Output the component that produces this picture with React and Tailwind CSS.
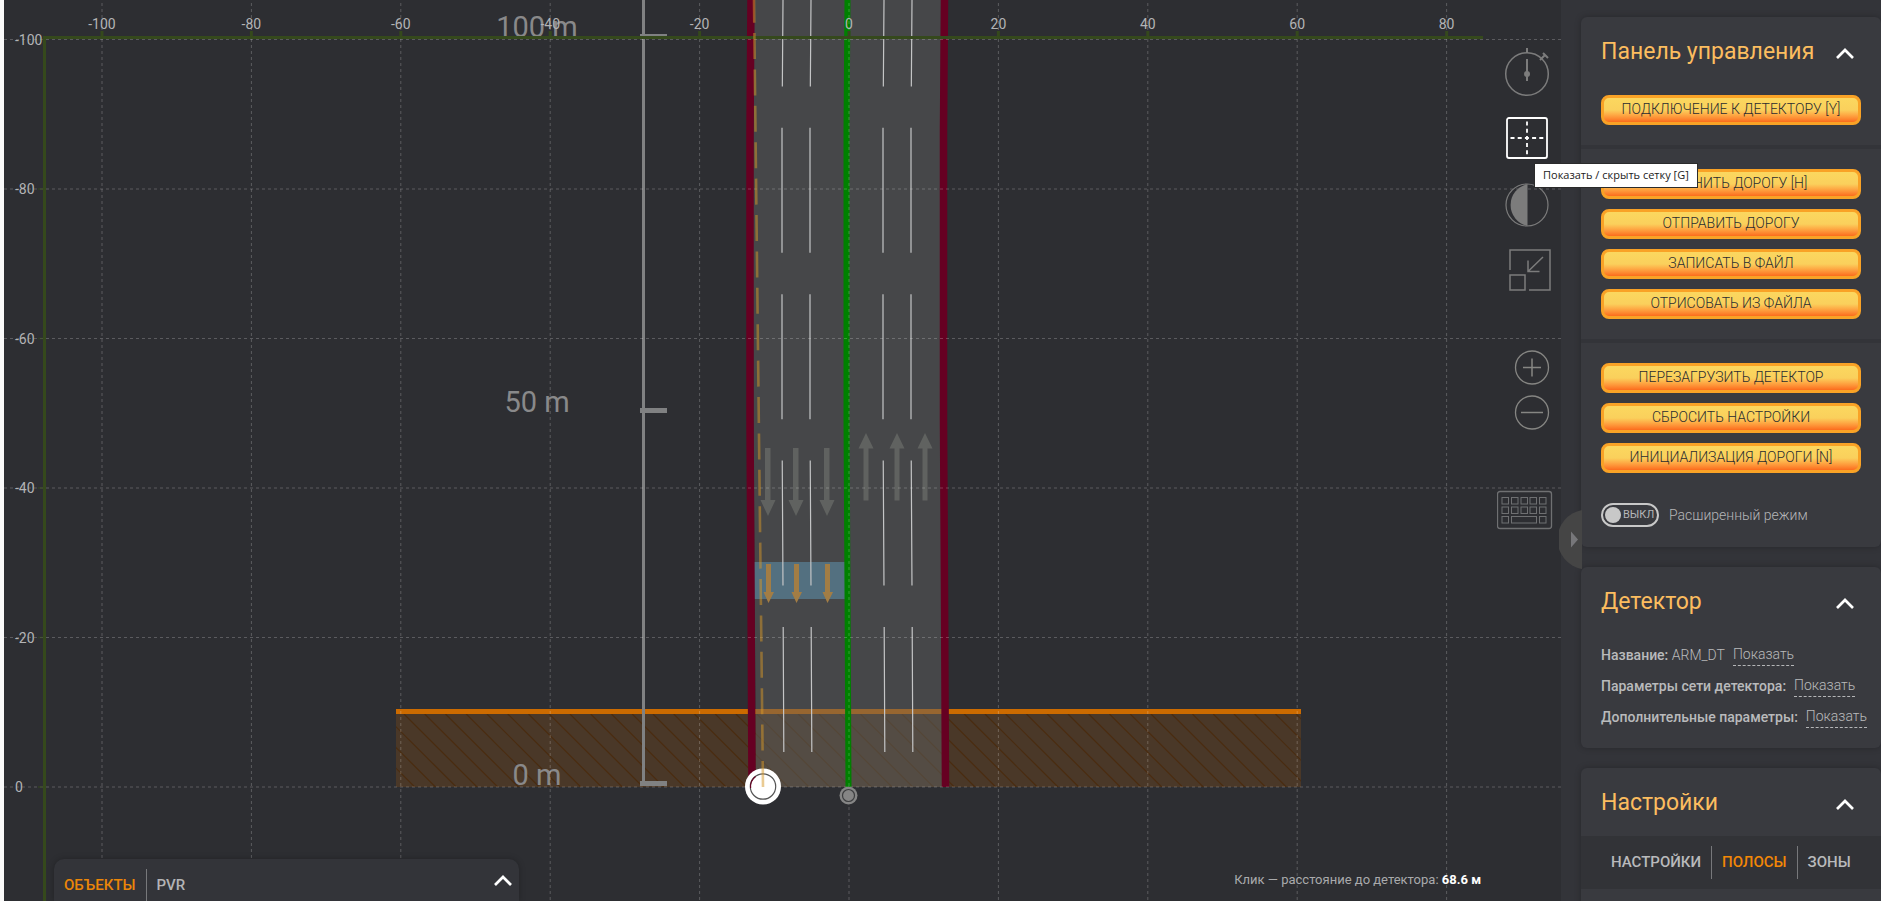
import { ChevronUp } from "lucide-react";

// Vertical drift of the road, [y, dx]
const BEND = [
  [0, 1],
  [130, 0],
  [420, 0],
  [590, 1],
  [787, 2],
];

const X_MARKS = [-100, -80, -60, -40, -20, 0, 20, 40, 60, 80];
const Y_MARKS = [-100, -80, -60, -40, -20, 0];
const LANES = [782, 810, 883, 911];
const DOWN_ARROWS = [768, 796, 827];
const UP_ARROWS = [866, 897, 925];
const HATCHES = Array.from({ length: 48 }, (_, i) => 321 + i * 20.75);

const toX = (m) => 849 + m * 7.47;
const toY = (m) => 787 + m * 7.475;
const roadLine = (x) => BEND.map(([y, dx]) => `${x + dx},${y}`).join(" ");

function RoadMap() {
  return (
    <svg
      viewBox="4 0 1557 901"
      preserveAspectRatio="xMinYMin slice"
      className="absolute inset-0 h-full w-full font-['Roboto',sans-serif]"
    >
      <defs>
        <clipPath id="ground">
          <rect x="396" y="714" width="905" height="73" />
        </clipPath>
      </defs>

      {/* Ground */}
      <rect x="396" y="712" width="905" height="75" fill="#4a3828" />
      <g clipPath="url(#ground)" stroke="#4a2c10" strokeWidth="1.2">
        {HATCHES.map((x) => (
          <line key={x} x1={x} y1="714" x2={x + 73} y2="787" />
        ))}
      </g>
      <rect x="396" y="709" width="905" height="5" fill="#cc6b00" />

      {/* Distance ruler */}
      <g fill="#808182">
        <rect x="642" y="0" width="3" height="786" />
        <rect x="640" y="34" width="27" height="5" />
        <rect x="640" y="408" width="27" height="5" />
        <rect x="640" y="781" width="27" height="5" />
      </g>
      <g fill="#89898a" fontSize="29" textAnchor="middle">
        <text x="537" y="37">100 m</text>
        <text x="537" y="412">50 m</text>
        <text x="537" y="785">0 m</text>
      </g>

      {/* Road */}
      <polygon
        points="754,0 753,250 754,500 756,787 943,787 941,500 940,250 941,0"
        fill="#606161"
        fillOpacity="0.49"
      />
      <rect x="754" y="562" width="91" height="37" fill="#629cbd" fillOpacity="0.48" />
      <g fill="none" stroke="#c4c5c6" strokeWidth="1.2" strokeDasharray="125 41.4" strokeDashoffset="38.6">
        {LANES.map((x) => (
          <polyline key={x} points={roadLine(x)} />
        ))}
      </g>
      <g fill="none" strokeWidth="7.5">
        <polyline points={roadLine(750)} stroke="#660022" />
        <polyline points={roadLine(943.5)} stroke="#660022" />
        <polyline points={roadLine(846.5)} stroke="#008000" strokeWidth="6" />
      </g>

      {/* Traffic directions */}
      <g fill="#606260">
        {DOWN_ARROWS.map((x) => (
          <path key={x} d={`M${x - 3} 448h5.5v52h5l-7.5 16-7.5-16h4.5z`} />
        ))}
        {UP_ARROWS.map((x) => (
          <path key={x} d={`M${x} 433l7.5 15.5h-5v52h-5v-52h-5z`} />
        ))}
      </g>
      <g fill="#a27d45">
        {DOWN_ARROWS.map((x) => (
          <path key={x} d={`M${x - 2} 564h5v28h3l-5.5 11-5-11h2.5z`} />
        ))}
      </g>

      {/* Grid */}
      <g stroke="#fff" strokeOpacity="0.22" strokeDasharray="3 3">
        {X_MARKS.map((m) => (
          <line key={m} x1={toX(m)} y1="3" x2={toX(m)} y2="901" />
        ))}
        {Y_MARKS.map((m) => (
          <line key={m} x1="4" y1={toY(m)} x2="1561" y2={toY(m)} />
        ))}
      </g>

      {/* Axes */}
      <g fill="#35491c">
        <rect x="43" y="36" width="1440" height="3" />
        <rect x="43" y="36" width="3" height="865" />
        {X_MARKS.map((m) => (
          <rect key={m} x={toX(m) - 1.5} y="31" width="3" height="6" />
        ))}
        {Y_MARKS.map((m) => (
          <rect key={m} x="38" y={toY(m) - 1} width="6" height="2" opacity="0.5" />
        ))}
      </g>
      <g fill="#b3b4b6" fontSize="14">
        {X_MARKS.map((m) => (
          <text key={m} x={toX(m)} y="29" textAnchor="middle">{m}</text>
        ))}
        {Y_MARKS.map((m) => (
          <text key={m} x="15" y={toY(m) + 5}>{m}</text>
        ))}
      </g>

      {/* Detector and origin handles */}
      <circle cx="763" cy="786.5" r="18" fill="#fff" />
      <circle cx="763" cy="786.5" r="12.7" fill="#fff" stroke="#555" strokeWidth="1.2" />
      <path d="M750.6 788a12.7 12.7 0 0 1 5-11.5" fill="none" stroke="#660022" strokeWidth="1.2" />
      <line
        x1="763"
        y1="787"
        x2="754"
        y2="0"
        stroke="#d69828"
        strokeOpacity="0.5"
        strokeWidth="2.6"
        strokeDasharray="26 10.4"
      />
      <circle cx="848.5" cy="795.5" r="9" fill="#858585" />
      <circle cx="848.5" cy="795.5" r="6" fill="#858585" stroke="#3c3d3f" strokeWidth="1.2" />
    </svg>
  );
}

function ToolButton({ label, className = "", children }) {
  return (
    <button type="button" aria-label={label} className={`w-14 ${className}`}>
      <svg viewBox="0 0 56 44" className="h-11 w-14 overflow-visible" fill="none" stroke="#7c7c7c" strokeWidth="1.5">
        {children}
      </svg>
    </button>
  );
}

function Toolbar() {
  return (
    <div className="absolute right-2 top-[51px] flex flex-col">
      <div className="flex flex-col gap-[22px]">
        <ToolButton label="Секундомер" className="h-11">
          <circle cx="30" cy="23" r="21.3" />
          <path d="M30 2v-5M30 8v22" strokeWidth="2" />
          <circle cx="30" cy="23" r="3" fill="#7c7c7c" stroke="none" />
          <path d="M43 9l5-5M46 2l5 5" strokeWidth="2" />
        </ToolButton>
        <div className="relative h-11">
          <ToolButton label="Сетка" className="h-11">
            <g stroke="#fff" strokeWidth="1.8">
              <rect x="10" y="1" width="40" height="40" rx="2" />
              <path d="M13.5 21h33" strokeDasharray="4 3.2" />
              <path d="M30 4.5v33" strokeDasharray="4 3.2" />
            </g>
          </ToolButton>
          <div
            role="tooltip"
            className="absolute left-[37px] top-[46px] flex h-[25px] items-center whitespace-nowrap border border-[#2b2b2b] bg-white px-2 font-['Open_Sans',sans-serif] text-[11px] text-[#222]"
          >
            Показать / скрыть сетку [G]
          </div>
        </div>
        <ToolButton label="Контраст" className="h-11">
          <circle cx="30" cy="22" r="21" strokeWidth="1.2" />
          <path d="M30.5 1a21.5 21.5 0 0 0 0 42z" fill="#7c7c7c" stroke="none" />
        </ToolButton>
        <ToolButton label="Уменьшить" className="h-11">
          <path d="M13 21V1h40v40H32" />
          <rect x="13" y="26" width="15" height="15" />
          <path d="M46 8L31 22.5M31 11.5v11h11.5" />
        </ToolButton>
      </div>
      <div className="mt-14 flex flex-col gap-[9px]">
        <button type="button" aria-label="Приблизить" className="h-9 w-14">
          <svg viewBox="0 0 56 36" className="h-9 w-14" fill="none" stroke="#868683">
            <circle cx="35" cy="18.5" r="16.5" strokeWidth="1.3" />
            <path d="M26 18.5h18M35 9.500v18" strokeWidth="1.5" />
          </svg>
        </button>
        <button type="button" aria-label="Отдалить" className="h-9 w-14">
          <svg viewBox="0 0 56 36" className="h-9 w-14" fill="none" stroke="#868683">
            <circle cx="35" cy="18.5" r="16.5" strokeWidth="1.3" />
            <path d="M24 18.5h22" strokeWidth="1.5" />
          </svg>
        </button>
      </div>
      <button type="button" aria-label="Клавиатура" className="mt-[60px] h-10 w-14">
        <svg viewBox="0 0 56 40" className="h-10 w-14" fill="none" stroke="#6f7072">
          <rect x="0.5" y="1.5" width="54" height="37" rx="2.5" strokeWidth="1.3" />
          {[5, 14.5, 24, 33, 42.5].map((x) => (
            <g key={x}>
              <rect x={x} y="7.5" width="6.5" height="6.5" />
              <rect x={x} y="17" width="6.5" height="6.5" />
            </g>
          ))}
          <rect x="5" y="26.5" width="6.5" height="6.5" />
          <rect x="14.5" y="26.5" width="25" height="6.5" />
          <rect x="42.5" y="26.5" width="6.5" height="6.5" />
        </svg>
      </button>
    </div>
  );
}

function ActionButton({ children }) {
  return (
    <button
      type="button"
      className="flex h-[30px] w-full items-center justify-center rounded-lg border-3 border-[#f9a226] bg-linear-to-b from-[#fbd75f] via-[#fad05c] via-50% to-[#fb6b1c] pb-0.5 text-[14px] font-light text-[#2b2c30]"
    >
      {children}
    </button>
  );
}

function Card({ title, className = "", children }) {
  return (
    <section className="overflow-hidden rounded-md bg-[#393a3f] shadow-[0_0_6px_rgba(0,0,0,0.25)]">
      <header className={`flex h-[58px] items-center justify-between px-5 pt-3 ${className}`}>
        <h2 className="text-[23px] leading-[46px] text-[#fcbd5f]">{title}</h2>
        <button type="button" aria-label="Свернуть" className="pt-1">
          <Chevron />
        </button>
      </header>
      {children}
    </section>
  );
}

function Chevron() {
  return <ChevronUp size={32} strokeWidth={2} strokeLinecap="butt" strokeLinejoin="miter" className="text-white" />;
}

function DetailRow({ label, value }) {
  return (
    <div className="flex h-[21px] items-start gap-2 whitespace-nowrap">
      <span className="leading-5">
        <span className="font-medium">{label}</span>
        {value && <span className="font-light"> {value}</span>}
      </span>
      <a href="#" className="h-[21px] border-b border-dashed border-[#b5b6b8] font-light leading-[18px]">
        Показать
      </a>
    </div>
  );
}

function Sidebar() {
  return (
    <aside className="relative w-80 shrink-0 bg-[#333439] pl-5 pt-[17px]">
      <button type="button" aria-label="Скрыть панель" className="absolute -left-0.5 top-[510px] z-10">
        <svg viewBox="0 0 23 59" className="h-[59px] w-[23px]">
          <path d="M23 0A30 30 0 0 0 23 59z" fill="#454545" />
          <path d="M12 21.5l7 8-7 8z" fill="#77777a" />
        </svg>
      </button>

      <div className="flex flex-col gap-5">
        <Card title="Панель управления">
          <div className="p-5">
            <ActionButton>ПОДКЛЮЧЕНИЕ К ДЕТЕКТОРУ [Y]</ActionButton>
          </div>
          <div className="flex flex-col gap-[10px] border-t-4 border-[#333439] p-5">
            <ActionButton>ИЗМЕНИТЬ ДОРОГУ [H]</ActionButton>
            <ActionButton>ОТПРАВИТЬ ДОРОГУ</ActionButton>
            <ActionButton>ЗАПИСАТЬ В ФАЙЛ</ActionButton>
            <ActionButton>ОТРИСОВАТЬ ИЗ ФАЙЛА</ActionButton>
          </div>
          <div className="flex flex-col gap-[10px] border-t-4 border-[#333439] p-5">
            <ActionButton>ПЕРЕЗАГРУЗИТЬ ДЕТЕКТОР</ActionButton>
            <ActionButton>СБРОСИТЬ НАСТРОЙКИ</ActionButton>
            <ActionButton>ИНИЦИАЛИЗАЦИЯ ДОРОГИ [N]</ActionButton>
            <label className="mt-5 flex h-6 items-center gap-[10px] text-[14px] font-light text-[#b5b6b8]">
              <input type="checkbox" role="switch" className="sr-only" />
              <span className="flex h-6 w-[58px] items-center gap-[2px] rounded-full border-2 border-[#c8c8c8] pl-[2px] text-[11px] font-normal">
                <span className="h-4 w-4 rounded-full bg-[#c8c8c8]" />
                ВЫКЛ
              </span>
              Расширенный режим
            </label>
          </div>
        </Card>

        <Card title="Детектор">
          <div className="flex flex-col gap-[10px] p-5 text-[14px] text-[#b9babc]">
            <DetailRow label="Название:" value="ARM_DT" />
            <DetailRow label="Параметры сети детектора:" />
            <DetailRow label="Дополнительные параметры:" />
          </div>
        </Card>

        <Card title="Настройки" className="mb-[10px]">
          <nav className="flex bg-[#323337] px-5 py-[10px] text-[15px] font-medium leading-[33px] text-[#b9babc]">
            <button type="button" className="px-[10px]">НАСТРОЙКИ</button>
            <button type="button" className="border-x border-[#77787b] px-[10px] text-[#f28706]">ПОЛОСЫ</button>
            <button type="button" className="px-[10px]">ЗОНЫ</button>
          </nav>
          <div className="h-10" />
        </Card>
      </div>
    </aside>
  );
}

export default function App() {
  return (
    <div className="flex h-screen overflow-hidden bg-[#fafafa] pl-1 font-['Roboto',sans-serif]">
      <main className="relative z-10 min-w-0 flex-1 bg-[#2d2e32]">
        <RoadMap />
        <Toolbar />

        {/* Objects drawer */}
        <div className="absolute bottom-0 left-[50px] flex h-[42px] w-[465px] items-start justify-between rounded-t-[10px] bg-[#333439] pt-[10px] shadow-[0_0_6px_rgba(0,0,0,0.25)]">
          <div className="flex text-[15px] font-medium leading-8 text-[#b3b4b6]">
            <button type="button" className="border-r border-[#77787b] px-[10px] text-[#ec8608]">ОБЪЕКТЫ</button>
            <button type="button" className="px-[10px]">PVR</button>
          </div>
          <button type="button" aria-label="Развернуть" className="-mt-1">
            <Chevron />
          </button>
        </div>

        <p className="absolute bottom-3 right-20 text-[13px] text-[#a9aaac]">
          Клик — расстояние до детектора: <strong className="font-bold text-white">68.6 м</strong>
        </p>
      </main>
      <Sidebar />
    </div>
  );
}
